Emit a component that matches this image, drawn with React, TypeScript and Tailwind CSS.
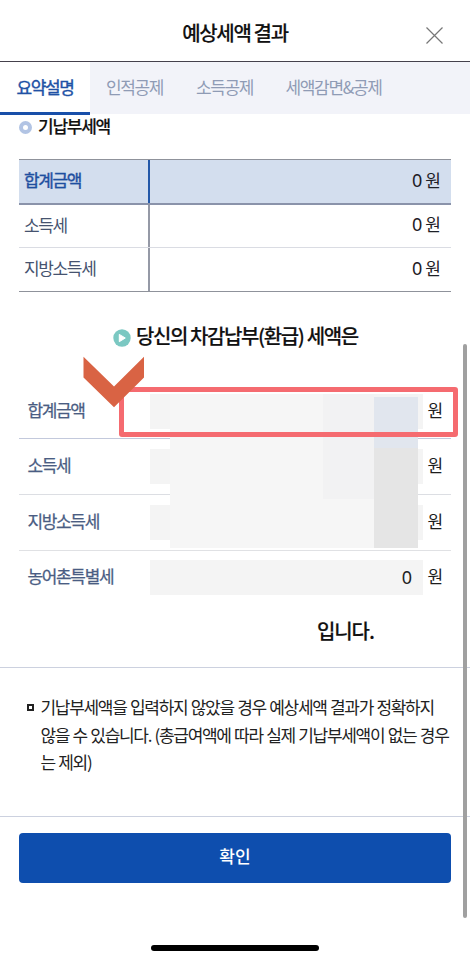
import React from "react";

const paid = [
  { label: "소득세", value: "0" },
  { label: "지방소득세", value: "0" },
];

const due = [
  { label: "합계금액", value: "", row: "h-[53px] pb-[2px]", line: "border-[#c3c9dc]" },
  { label: "소득세", value: "", row: "h-[56px]", line: "border-[#dcdee3]" },
  { label: "지방소득세", value: "", row: "h-[56px]", line: "border-[#e0e1e4]" },
  { label: "농어촌특별세", value: "0", row: "h-[54px]", line: "border-transparent" },
];

function PaidAmount({ value }: { value: string }) {
  return (
    <span className="flex flex-1 items-center justify-end gap-[3px] pb-[4px] pr-[11px] text-[17px] tracking-normal text-[#1d2026]">
      <span className="font-['Noto_Sans',sans-serif] text-[18px]">{value}</span>
      <span className="-mr-[1px]">원</span>
    </span>
  );
}

function Header() {
  return (
    <header className="relative flex h-[62px] items-center justify-center border-b border-[#45414c]">
      <h1 className="mt-[5px] text-[20px] font-medium tracking-[-1.35px] text-[#111] [-webkit-text-stroke:0.15px_#111]">예상세액 결과</h1>
      <button aria-label="닫기" className="absolute right-[27px] top-[27px]">
        <svg className="size-[17px]" viewBox="0 0 17 17" fill="none" stroke="#777" strokeWidth="1.2">
          <path d="M0.5 0.5 16.5 16.5M16.5 0.5 0.5 16.5" />
        </svg>
      </button>
    </header>
  );
}

function Tabs() {
  return (
    <nav className="flex h-[52px] bg-[#f2f3f9] text-[17px] tracking-[-1.35px] text-[#8f9bb5]">
      <span className="flex h-[53px] w-[90px] items-center justify-center border-b-[3px] border-[#184fa9] bg-white text-[#2051a5] [-webkit-text-stroke:0.4px_#2051a5]">요약설명</span>
      <span className="flex w-[90px] items-center justify-center pb-[2px] pr-[1px]">인적공제</span>
      <span className="flex w-[90px] items-center justify-center pb-[2px] pr-[1px]">소득공제</span>
      <span className="flex w-[128px] items-center justify-center pb-[2px] pr-[1px]">세액감면&amp;공제</span>
    </nav>
  );
}

function PaidTable() {
  return (
    <section className="mx-[19px] mt-[21px] border-b border-t border-[#8f929b] text-[17px] tracking-[-1.35px]">
      <div className="flex h-[45px] border-b-2 border-[#8a93aa] bg-[#d3deee]">
        <span className="flex w-[131px] items-center border-r-2 border-[#2358a8] pb-[3px] pl-[5px] text-[#1e4fa0] [-webkit-text-stroke:0.4px_#1e4fa0]">합계금액</span>
        <PaidAmount value="0" />
      </div>
      {paid.map((item, i) => (
        <div key={item.label} className={i === 0 ? "flex h-[43px] border-b border-[#dadce3]" : "flex h-[43px]"}>
          <span className="flex w-[131px] items-center border-r-2 border-[#9599a6] pb-[3px] pl-[5px] text-[#46536f]">{item.label}</span>
          <PaidAmount value={item.value} />
        </div>
      ))}
    </section>
  );
}

function DueTable() {
  return (
    <section className="relative mx-[19px] mt-[31px] text-[17px]">
      {due.map((item) => (
        <div key={item.label} className={"flex items-center border-b " + item.row + " " + item.line}>
          <span className="w-[131px] pb-[3px] pl-[8.5px] tracking-[-1.35px] text-[#4a5d83] [-webkit-text-stroke:0.25px_#4a5d83]">{item.label}</span>
          <span className="flex h-[35px] w-[273px] items-center justify-end bg-[#f4f4f4] pb-[2px] pr-[11px] font-['Noto_Sans',sans-serif] text-[18px] text-[#222]">{item.value}</span>
          <span className="pb-[3px] pl-[4.5px] text-[#1d1d1d]">원</span>
        </div>
      ))}
      {/* Masked amounts */}
      <div className="absolute left-[151px] top-[8px] h-[154px] w-[248px] bg-[#f6f6f6]" />
      <div className="absolute left-[304px] top-[8px] h-[105px] w-[51px] bg-[#f2f2f3]" />
      <div className="absolute left-[355px] top-[8px] h-[3px] w-[44px] bg-[#f3f3f3]" />
      <div className="absolute left-[355px] top-[11px] h-[151px] w-[44px] bg-[#e5e5e5]" />
      <div className="absolute left-[355px] top-[11px] h-[51px] w-[44px] bg-[#e1e6ee]" />
      {/* Highlight frame and arrow */}
      <div className="absolute left-[100px] top-[1px] h-[50px] w-[339px] rounded-[3px] border-[5px] border-[#f56b70]" />
      <svg className="absolute left-[64px] top-[-30px] h-[53px] w-[62px]" viewBox="0 0 62 53">
        <path d="M0.5 0.8 31 30.5 61 0.8V21.5L31 51.3 0.5 21.5Z" fill="#d96344" />
      </svg>
    </section>
  );
}

export default function App() {
  return (
    <main className="relative flex h-[960px] w-[470px] flex-col overflow-hidden bg-white font-['Noto_Sans_CJK_KR',sans-serif] leading-[24px]">
      <Header />
      <Tabs />
      <h2 className="flex h-[24px] items-center pl-[19px] text-[17px] font-medium tracking-[-1.25px] text-[#111]">
        <span className="mr-[6px] mt-[2px] size-[13px] rounded-full border-[4px] border-[#b2c4e4]" />
        <span className="-mt-[1px] [-webkit-text-stroke:0.15px_#111]">기납부세액</span>
      </h2>
      <PaidTable />
      <h2 className="mt-[32px] flex h-[24px] items-center pl-[113px] text-[20px] font-medium tracking-[-1.4px] text-[#111]">
        <svg className="mr-[5px] mt-[3px] size-[18px]" viewBox="0 0 18 18">
          <circle cx="9" cy="9" r="8.7" fill="#7bc8c2" />
          <path d="M6.3 5.4 12.3 9 6.3 12.7Z" fill="white" stroke="white" strokeLinejoin="round" />
        </svg>
        <span className="[-webkit-text-stroke:0.15px_#111]">당신의 차감납부(환급) 세액은</span>
      </h2>
      <div className="mt-[7px]">
        <DueTable />
      </div>
      <p className="mt-[14px] h-[24px] pl-[317px] text-[20px] font-medium tracking-[-1.1px] text-[#111] [-webkit-text-stroke:0.15px_#111]">입니다.</p>
      <div className="mt-[24px] flex h-[150px] border-b border-t border-[#ccd1df] pl-[27px] pt-[25px] text-[17px] leading-[27.5px] tracking-[-1.3px] text-[#222] [word-spacing:0.9px]">
        <span className="mr-[6.5px] mt-[11px] size-[7px] border-2 border-[#222]" />
        <p className="whitespace-nowrap">
          기납부세액을 입력하지 않았을 경우 예상세액 결과가 정확하지
          <br />
          않을 수 있습니다. (총급여액에 따라 실제 기납부세액이 없는 경우
          <br />는 제외)
        </p>
      </div>
      <button className="mx-[19px] mt-[16px] h-[50px] rounded-[4px] bg-[#0e4eae] pb-[4px] text-[17px] font-medium text-white">확인</button>
      <div className="mx-auto mt-[62px] h-[6px] w-[168px] rounded-full bg-black" />
      <div className="absolute left-[463px] top-[344px] h-[574px] w-[4px] rounded-full bg-[#a0a0a0]" />
    </main>
  );
}
